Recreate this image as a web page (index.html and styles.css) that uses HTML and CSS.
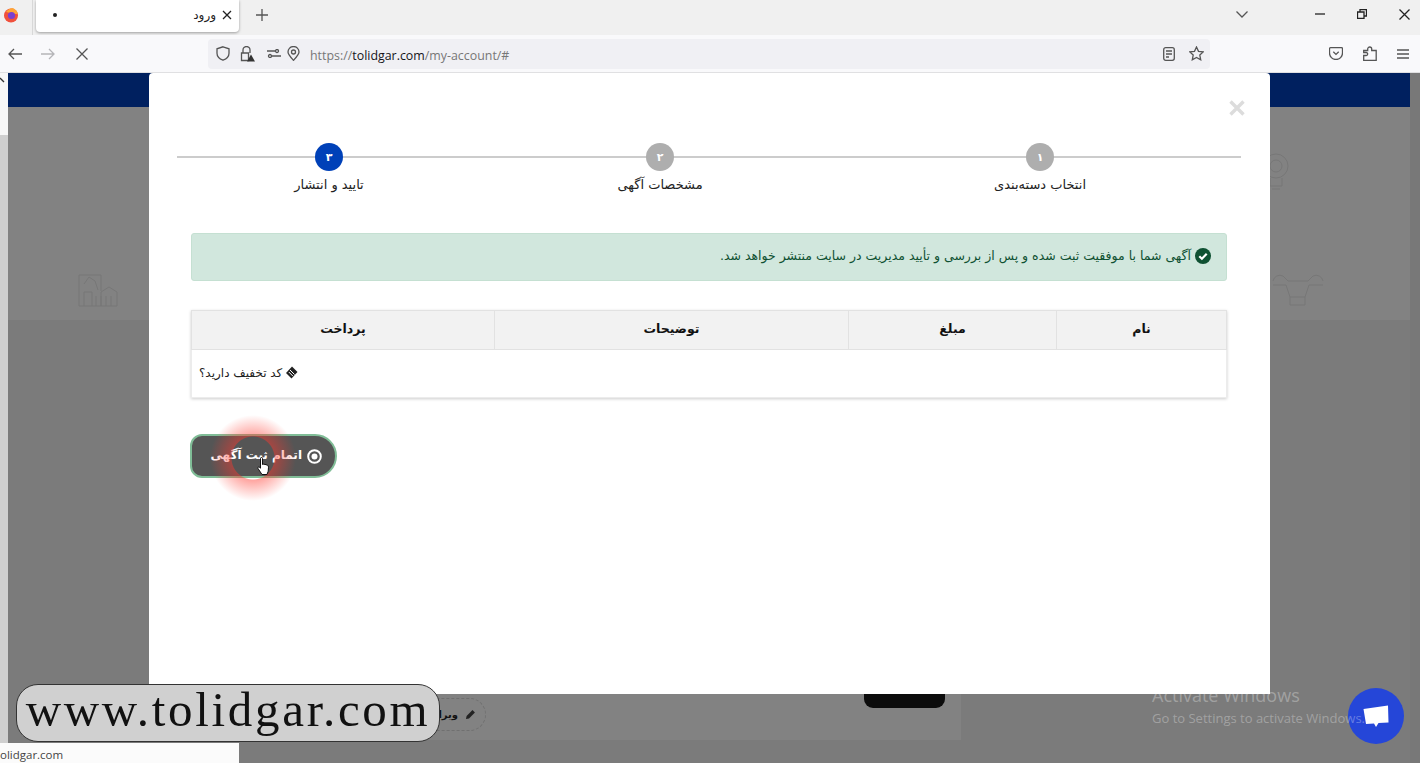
FILE: index.html
```html
<!DOCTYPE html>
<html>

<head>
    <meta charset='utf-8'>
    <title>ورود</title>
    <link rel="stylesheet" href="styles.css">
</head>

<body>
    <div class="tabbar">
        <svg class="fox" width="16" height="16" viewBox="0 0 16 16"><circle cx="8" cy="8.5" r="7" fill="#f0503c"/><path d="M3 5 Q6 1 10 1 Q14 3 15 7 L12 7 Z" fill="#ffa436"/><circle cx="8.5" cy="8.5" r="3.6" fill="#7a3fd0"/></svg>
        <div class="tab-sep"></div>
        <div class="tab">
            <span class="tab-dot"></span>
            <span class="tab-title">ورود</span>
            <svg width="10" height="10" viewBox="0 0 10 10"><path d="M1 1l8 8M9 1l-8 8" class="ic-dark"/></svg>
        </div>
        <svg class="new-tab" width="12" height="12" viewBox="0 0 12 12"><path d="M6 0v12M0 6h12" class="ic"/></svg>
        <div class="tabbar-right">
            <svg class="all-tabs" width="12" height="7" viewBox="0 0 12 7"><path d="M.5.5L6 6 11.500.5" class="ic"/></svg>
            <svg class="win-min" width="10" height="2" viewBox="0 0 10 2"><path d="M0 1h10" class="ic-dark"/></svg>
            <svg class="win-max" width="10" height="10" viewBox="0 0 10 10"><path d="M.5 3h6.500v6.500H.5zM3 3V.5h6.500V7H7" class="ic-dark"/></svg>
            <svg class="win-close" width="11" height="11" viewBox="0 0 11 11"><path d="M.5.5l10 10M10.500.5l-10 10" class="ic-dark"/></svg>
        </div>
    </div>

    <div class="navbar">
        <svg class="nav-back" width="14" height="12" viewBox="0 0 14 12"><path d="M14 6H1M6 1L1 6l5 5" class="ic"/></svg>
        <svg class="nav-fwd" width="14" height="12" viewBox="0 0 14 12"><path d="M0 6h13M8 1l5 5-5 5" class="ic-off"/></svg>
        <svg class="nav-stop" width="12" height="12" viewBox="0 0 12 12"><path d="M.5.5l11 11M11.500.5l-11 11" class="ic"/></svg>
        <div class="urlbar">
            <svg width="14" height="15" viewBox="0 0 14 15"><path d="M7 .8l6 2v4.500c0 3.500-3 5.800-6 6.900-3-1.100-6-3.400-6-6.900V2.800z" class="ic"/></svg>
            <svg class="lock" width="15" height="16" viewBox="0 0 15 16"><path d="M3 7V4a3.500 3.500 0 017 0v3M1.500 7h7v7.500h-7z" class="ic"/><path d="M11 8.500l4 7H7z" fill="#333"/></svg>
            <svg class="perm" width="14" height="9" viewBox="0 0 14 9"><circle cx="10" cy="2" r="1.500" class="ic"/><circle cx="3" cy="7" r="1.500" class="ic"/><path d="M0 2h8M5 7h9" class="ic"/></svg>
            <svg class="pin" width="13" height="15" viewBox="0 0 13 15"><path d="M6.500 14.300C3 10.500 1 8.500 1 6a5.500 5.500 0 0111 0c0 2.500-2 4.500-5.500 8.300z" class="ic"/><circle cx="6.500" cy="6" r="2" class="ic"/></svg>
            <div class="url"><span class="url-dim">https://</span>tolidgar.com<span class="url-dim">/my-account/#</span></div>
            <svg class="reader" width="12" height="14" viewBox="0 0 12 14"><rect x=".7" y=".7" width="10.600" height="12.600" rx="2" class="ic"/><path d="M3 4h6M3 7h6M3 10h3" class="ic"/></svg>
            <svg class="star" width="15" height="15" viewBox="0 0 15 15"><path d="M7.500 1l2 4.300 4.700.6-3.400 3.200.9 4.700-4.200-2.300-4.200 2.300.9-4.700L.8 5.900l4.700-.6z" class="ic"/></svg>
        </div>
        <div class="nav-right">
            <svg width="14" height="13" viewBox="0 0 14 13"><path d="M1.500.7h11a1 1 0 011 1V6a6.500 6.500 0 01-13 0V1.700a1 1 0 011-1z" class="ic"/><path d="M4.300 4.800L7 7.400l2.700-2.600" class="ic"/></svg>
            <svg width="14" height="15" viewBox="0 0 14 15"><path d="M.7 9.500h2.500a1.500 1.500 0 000-3H.7V4.500h4V3a2 2 0 014 0v1.500h4.500v10H.7z" class="ic"/></svg>
            <svg width="12" height="10" viewBox="0 0 12 10"><path d="M0 1h12M0 5h12M0 9h12" class="ic"/></svg>
        </div>
    </div>

    <div class="viewport">
        <div class="page">
            <div class="strip-left">
                <div class="strip-top">
                    <svg class="strip-mark" width="5" height="7" viewBox="0 0 5 7"><path d="M0 1l4 4" stroke="#333" stroke-width="1.300" fill="none"/></svg>
                </div>
            </div>
            <div class="site">
                <div class="site-head"></div>
                <div class="site-band">
                    <svg class="faint-factory" width="40" height="36" viewBox="0 0 40 36"><path d="M1 34V3h22v16M1 34h38V20l-8-5-8 5v14M6 34V20h8v14M18 24v10M23 24v10M28 24v10M33 24v10M6 12l5-7 6 4 3 9" class="faint"/></svg>
                    <svg class="faint-bulb" width="28" height="40" viewBox="0 0 28 40"><circle cx="10" cy="13" r="12" class="faint"/><circle cx="10" cy="13" r="6" class="faint"/><path d="M4 25v8h12v-8M6 36h8" class="faint"/></svg>
                    <svg class="faint-wrench" width="52" height="34" viewBox="0 0 52 34"><path d="M1 8a7 7 0 0110-5l5 5h20l5-5a7 7 0 0110 5M14 12l4 12h15l4-12M18 24v8h15v-8M14 12H1M37 12h14" class="faint"/></svg>
                </div>
                <div class="site-rest">
                    <div class="card">
                        <div class="edit-pill">
                            <svg width="11" height="11" viewBox="0 0 11 11"><path d="M1 10l.6-3L7.500 1.100l2.400 2.400L4 9.400z" fill="#222"/></svg>
                            <span class="edit-label">ویرا</span>
                        </div>
                        <div class="thumb"></div>
                    </div>
                </div>
            </div>
            <div class="strip-right"></div>
        </div>

        <div class="modal">
            <svg class="modal-close" width="16" height="16" viewBox="0 0 16 16"><path d="M1.500 1.500l13 13M14.500 1.500l-13 13"/></svg>

            <div class="steps">
                <div class="step">
                    <span class="step-num">۱</span>
                    <span class="step-label">انتخاب دسته‌بندی</span>
                </div>
                <div class="step">
                    <span class="step-num">۲</span>
                    <span class="step-label">مشخصات آگهی</span>
                </div>
                <div class="step active">
                    <span class="step-num">۳</span>
                    <span class="step-label">تایید و انتشار</span>
                </div>
            </div>

            <div class="alert">
                <svg width="16" height="16" viewBox="0 0 16 16"><circle cx="8" cy="8" r="8" fill="#0f5132"/><path d="M4.300 8.300l2.600 2.500 4.800-5" fill="none" stroke="#fff" stroke-width="2.200"/></svg>
                <span>آگهی شما با موفقیت ثبت شده و پس از بررسی و تأیید مدیریت در سایت منتشر خواهد شد.</span>
            </div>

            <table class="pay-table">
                <thead>
                    <tr>
                        <th class="col-name">نام</th>
                        <th class="col-price">مبلغ</th>
                        <th class="col-desc">توضیحات</th>
                        <th class="col-pay">پرداخت</th>
                    </tr>
                </thead>
                <tbody>
                    <tr>
                        <td colspan="4">
                            <div class="coupon">
                                <svg width="13" height="13" viewBox="0 0 13 13"><path d="M7 .5l5.500 5.500-6 6.500L1 7z" fill="#222"/><path d="M5 4l4.500 4.500M3.800 6l4 4" stroke="#fff" stroke-width="1"/></svg>
                                <span>کد تخفیف دارید؟</span>
                            </div>
                        </td>
                    </tr>
                </tbody>
            </table>

            <div class="finish-wrap">
                <button class="finish-btn" type="button">
                    <svg width="15" height="15" viewBox="0 0 15 15"><circle cx="7.500" cy="7.500" r="6.300" fill="none" stroke="#fff" stroke-width="2"/><circle cx="7.500" cy="7.500" r="3" fill="#fff"/></svg>
                    <span class="finish-text">اتمام ثبت آگهی</span>
                </button>
                <div class="click-halo"></div>
                <svg class="hand" width="13" height="19" viewBox="0 0 13 19"><path d="M3.500 1.500a1 1 0 012 0v6l1-.3 1.500.2 1 .3 1.500.5c.7.4 1 1 1 2l-.3 4-1.200 3.300H5L1 11.500c-.5-1 .3-1.800 1.300-1.300l1.200 1z" fill="#fff" stroke="#111" stroke-width="1"/></svg>
            </div>
        </div>

        <div class="watermark">www.tolidgar.com</div>

        <div class="chat-btn">
            <svg width="26" height="23" viewBox="0 0 26 23"><path d="M.5 4L25 .5l.5 17-10 .5-2.500 4-2-3.500-8 .5z" fill="#fff"/></svg>
        </div>

        <div class="activate">
            <div class="activate-title">Activate Windows</div>
            <div class="activate-sub">Go to Settings to activate Windows.</div>
        </div>

        <div class="status-bar">olidgar.com</div>
    </div>
</body>

</html>
```

FILE: styles.css
```css
* {
    box-sizing: border-box;
}

html, body {
    margin: 0;
    height: 100%;
    overflow: hidden;
}

body {
    display: flex;
    flex-direction: column;
    width: 1420px;
    height: 763px;
    font-family: "DejaVu Sans", sans-serif;
    color: #222;
}

svg {
    flex: none;
    display: block;
}

.ic, .ic-dark, .ic-off {
    fill: none;
    stroke: #555;
    stroke-width: 1.3;
}

.ic-dark {
    stroke: #222;
}

.ic-off {
    stroke: #b5b5b8;
}

/* browser tabs */
.tabbar {
    height: 35px;
    flex: none;
    display: flex;
    align-items: flex-start;
    background-color: #f0f0f0;
}

.fox {
    margin: 7px 0 0 3px;
}

.tab-sep {
    width: 1px;
    height: 35px;
    margin-left: 13px;
    background-color: #d8d8d8;
}

.tab {
    width: 203px;
    height: 32px;
    margin-left: 3px;
    padding: 0 7px 2px 17px;
    display: flex;
    align-items: center;
    background-color: #fff;
    border-radius: 0 0 4px 4px;
    box-shadow: 0 1px 3px rgba(0, 0, 0, .35);
}

.tab-dot {
    width: 4px;
    height: 4px;
    border-radius: 50%;
    background-color: #222;
}

.tab-title {
    margin-left: auto;
    margin-right: 6px;
    font-size: 12px;
    direction: rtl;
}

.new-tab {
    margin: 9px 0 0 17px;
}

.tabbar-right {
    margin-left: auto;
    display: flex;
    align-items: center;
    height: 28px;
    padding-right: 10px;
}

.win-min {
    margin-left: 67px;
}

.win-max {
    margin-left: 32px;
}

.win-close {
    margin-left: 32px;
}

/* browser toolbar */
.navbar {
    height: 38px;
    flex: none;
    display: flex;
    align-items: center;
    background-color: #f9f9fb;
    border-bottom: 1px solid #e0e0e2;
}

.nav-back {
    margin-left: 8px;
}

.nav-fwd {
    margin-left: 19px;
}

.nav-stop {
    margin-left: 21px;
}

.urlbar {
    width: 1002px;
    height: 30px;
    margin-left: 120px;
    padding: 0 6px 0 8px;
    display: flex;
    align-items: center;
    background-color: #f0f0f4;
    border-radius: 4px;
}

.lock {
    margin-left: 10px;
}

.perm {
    margin-left: 12px;
}

.pin {
    margin-left: 6px;
}

.url {
    margin: 4px 0 0 10px;
    font-family: "Open Sans", sans-serif;
    font-size: 12.400px;
    color: #15141a;
}

.url-dim {
    color: #777;
}

.reader {
    margin-left: auto;
}

.star {
    margin-left: 14px;
}

.nav-right {
    flex: 1;
    display: flex;
    align-items: center;
    justify-content: space-between;
    padding: 0 11px 0 119px;
}

/* dimmed site behind the modal */
.viewport {
    flex: 1;
    position: relative;
    overflow: hidden;
}

.page {
    height: 100%;
    display: flex;
    background-color: #7b7b7b;
}

.strip-left {
    width: 8px;
    flex: none;
    background-color: #cfcfcf;
}

.strip-top {
    height: 62px;
    padding-top: 4px;
    background-color: #f7f7f7;
}

.strip-right {
    width: 10px;
    flex: none;
    background-color: #787878;
}

.site {
    flex: 1;
    display: flex;
    flex-direction: column;
}

.site-head {
    height: 34px;
    flex: none;
    background-color: #00205f;
}

.site-band {
    height: 213px;
    flex: none;
    position: relative;
    background-color: #828282;
}

.faint {
    fill: none;
    stroke: #777;
    stroke-width: 1;
}

.faint-factory {
    position: absolute;
    left: 70px;
    top: 165px;
}

.faint-bulb {
    position: absolute;
    right: 116px;
    top: 46px;
}

.faint-wrench {
    position: absolute;
    right: 86px;
    top: 166px;
}

.site-rest {
    flex: 1;
    display: flex;
    flex-direction: column;
    justify-content: flex-end;
    padding-bottom: 23px;
}

.card {
    width: 812px;
    height: 50px;
    margin-left: 141px;
    padding: 0 16px 9px 251px;
    display: flex;
    justify-content: space-between;
    align-items: flex-end;
    background-color: #828282;
}

.edit-pill {
    width: 86px;
    height: 33px;
    padding: 0 9px;
    display: flex;
    align-items: center;
    gap: 7px;
    direction: rtl;
    border: 1px dashed #707070;
    border-radius: 17px;
    font-size: 10px;
    font-weight: bold;
    color: #111;
}

.edit-label {
    white-space: nowrap;
}

.thumb {
    width: 81px;
    height: 40px;
    margin-bottom: 23px;
    background-color: #0c0c0c;
    border-radius: 0 0 9px 9px;
}

/* ad wizard */
.modal {
    position: absolute;
    left: 149px;
    top: 0;
    width: 1121px;
    height: 621px;
    padding: 70px 43px 0 42px;
    background-color: #fff;
    border-radius: 4px 4px 0 0;
}

.modal-close {
    position: absolute;
    right: 25px;
    top: 27px;
    fill: none;
    stroke: #dcdcdc;
    stroke-width: 3.4;
}

.steps {
    margin: 0 -14px;
    display: grid;
    grid-template-columns: 402px 358px 304px;
    direction: rtl;
    background: linear-gradient(#ccc, #ccc) 0 13px / 100% 2px no-repeat;
}

.step {
    display: flex;
    flex-direction: column;
    align-items: center;
    gap: 5px;
}

.step-num {
    width: 28px;
    height: 28px;
    display: flex;
    align-items: center;
    justify-content: center;
    border-radius: 50%;
    background-color: #aeaeae;
    color: #fff;
    font-size: 11px;
    font-weight: bold;
}

.step.active .step-num {
    background-color: #0041b8;
}

.step-label {
    font-size: 13px;
    line-height: 18px;
}

.alert {
    height: 48px;
    margin-top: 39px;
    padding: 0 15px 3px;
    display: flex;
    align-items: center;
    gap: 4px;
    direction: rtl;
    background-color: #d1e7dd;
    border: 1px solid #c5e0d2;
    border-radius: 3px;
    color: #0f5132;
    font-size: 12.500px;
}

.pay-table {
    width: 1036px;
    margin-top: 29px;
    direction: rtl;
    table-layout: fixed;
    border-collapse: collapse;
    box-shadow: 0 1px 3px rgba(0, 0, 0, .2);
}

.pay-table th {
    height: 39px;
    padding: 0 0 3px;
    background-color: #f2f2f2;
    border: 1px solid #e2e2e2;
    font-size: 12.500px;
    color: #111;
}

.pay-table td {
    height: 48px;
    padding: 0 7px;
    border: 1px solid #ececec;
}

.col-name {
    width: 170px;
}

.col-price {
    width: 208px;
}

.col-desc {
    width: 354px;
}

.coupon {
    display: flex;
    align-items: center;
    justify-content: flex-end;
    gap: 3px;
    margin-top: -2px;
    font-size: 12px;
}

.finish-wrap {
    position: relative;
    width: 147px;
    margin-top: 36px;
    margin-left: -1px;
}

.finish-btn {
    width: 147px;
    height: 44px;
    padding: 0 13px;
    display: flex;
    align-items: center;
    gap: 5px;
    direction: rtl;
    white-space: nowrap;
    background-color: #555;
    border: 2px solid #80bd97;
    border-radius: 12px 22px 22px 12px;
    color: #fff;
    font-family: inherit;
    font-size: 12px;
    font-weight: bold;
}

.finish-text {
    margin-bottom: 2px;
}

.click-halo {
    position: absolute;
    left: 20px;
    top: -19px;
    width: 86px;
    height: 86px;
    border-radius: 50%;
    background: radial-gradient(circle, transparent 21px, rgba(255, 55, 45, .45) 22px, rgba(255, 55, 45, 0) 43px);
}

.hand {
    position: absolute;
    left: 67px;
    top: 23px;
}

/* things lying over the recording */
.watermark {
    position: absolute;
    left: 16px;
    top: 611px;
    width: 424px;
    height: 58px;
    padding-bottom: 8px;
    display: flex;
    align-items: center;
    justify-content: center;
    background-color: #d0d0d0;
    border: 1px solid #333;
    border-radius: 22px;
    font-family: "Liberation Serif", serif;
    font-size: 49px;
    letter-spacing: 2.700px;
    color: #111;
}

.activate {
    position: absolute;
    left: 1152px;
    top: 609px;
    font-family: "Open Sans", sans-serif;
    color: rgba(255, 255, 255, .3);
    white-space: nowrap;
}

.activate-title {
    font-size: 18px;
    line-height: 26px;
}

.activate-sub {
    font-size: 13px;
    line-height: 20px;
}

.chat-btn {
    position: absolute;
    left: 1348px;
    top: 615px;
    width: 56px;
    height: 56px;
    display: flex;
    align-items: center;
    justify-content: center;
    border-radius: 50%;
    background-color: #2546d8;
}

.status-bar {
    position: absolute;
    left: 0;
    bottom: 0;
    width: 239px;
    height: 20px;
    padding-top: 2px;
    display: flex;
    align-items: center;
    background-color: #fbfbfb;
    font-family: "Open Sans", sans-serif;
    font-size: 11.500px;
    color: #444;
}
```
